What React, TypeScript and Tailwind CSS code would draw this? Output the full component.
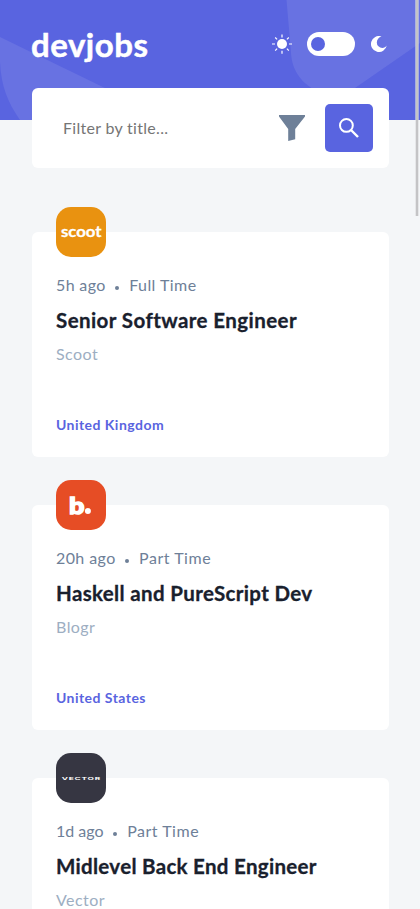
import React from "react";

type Job = {
  logo: React.ReactNode;
  logoClass: string;
  age: string;
  ageClass: string;
  contract: string;
  contractClass: string;
  title: string;
  titleClass: string;
  company: string;
  location: string;
};

const jobs: Job[] = [
  {
    logo: <ScootLogo />,
    logoClass: "bg-[#e99210]",
    age: "5h ago",
    ageClass: "tracking-[0.35px]",
    contract: "Full Time",
    contractClass: "tracking-[0.45px]",
    title: "Senior Software Engineer",
    titleClass: "tracking-[0.42px]",
    company: "Scoot",
    location: "United Kingdom",
  },
  {
    logo: <BlogrLogo />,
    logoClass: "bg-[#e64d25]",
    age: "20h ago",
    ageClass: "tracking-[0.4px]",
    contract: "Part Time",
    contractClass: "tracking-[0.52px]",
    title: "Haskell and PureScript Dev",
    titleClass: "tracking-[0.35px]",
    company: "Blogr",
    location: "United States",
  },
  {
    logo: <VectorLogo />,
    logoClass: "bg-[#363642]",
    age: "1d ago",
    ageClass: "tracking-[0.01px]",
    contract: "Part Time",
    contractClass: "tracking-[0.52px]",
    title: "Midlevel Back End Engineer",
    titleClass: "tracking-[0.3px]",
    company: "Vector",
    location: "Russia",
  },
];

function ScootLogo() {
  return (
    <svg width="50" height="50" viewBox="0 0 50 50" fill="white" stroke="white" strokeWidth="0.3">
      <text x="5" y="29.9" textLength="40.5" lengthAdjust="spacingAndGlyphs" fontFamily="Lato, sans-serif" fontSize="15.5" fontWeight="700">
        scoot
      </text>
    </svg>
  );
}

function BlogrLogo() {
  return (
    <svg width="50" height="50" viewBox="0 0 50 50" fill="white">
      <text x="13" y="33.7" textLength="15.5" lengthAdjust="spacingAndGlyphs" fontFamily="Lato, sans-serif" fontSize="22.5" fontWeight="900" stroke="white" strokeWidth="1.3">
        b
      </text>
      <circle cx="31.9" cy="31" r="3" />
    </svg>
  );
}

function VectorLogo() {
  return (
    <svg width="50" height="50" viewBox="0 0 50 50" fill="white">
      <text x="5.7" y="26.9" textLength="39.4" lengthAdjust="spacingAndGlyphs" letterSpacing="0.4" fontFamily="Inter, sans-serif" fontSize="4.1" fontWeight="700">
        VECTOR
      </text>
    </svg>
  );
}

function HeaderPattern() {
  return (
    <svg className="absolute inset-0" width="420" height="120" fill="white" fillOpacity="0.09">
      <path d="M0 37 L105 88 L170 120 L20 120 C8 103 1 86 0 62 Z" />
      <path d="M286.5 0 L291 53 C292 72 303 84 317 91 C330 97 344 96 355 88 L420 43 L420 0 Z" />
    </svg>
  );
}

function SunIcon() {
  return (
    <svg width="20" height="20" viewBox="0 0 20 20" fill="none" stroke="white" strokeWidth="1.2">
      <circle cx="10" cy="10" r="5" fill="white" stroke="none" />
      <path d="M0 10h3M17 10h3M3.2 3.5l1.9 1.9M14.9 14.7l1.9 1.9M3.2 16.6l1.9-1.9M14.9 5.4l1.9-1.9" />
      <path d="M10 .5v3M10 16.7v3" strokeWidth="2" strokeOpacity="0.6" />
    </svg>
  );
}

function MoonIcon() {
  return (
    <svg width="16" height="16" viewBox="0 0 16 16" fill="white">
      <path d="M10.5 .4A8 8 0 1 0 15.8 9.6C14.8 11 13.2 11.9 11.3 11.9A5.5 5.5 0 0 1 5.8 6.4C5.8 3.4 7.8 1.1 10.5 .4Z" />
    </svg>
  );
}

function JobCard({ job }: { job: Job }) {
  return (
    <article className="relative h-[225px] shrink-0 rounded-md bg-white px-6 pt-[41px]">
      <div className={`absolute -top-[25px] left-6 size-[50px] overflow-hidden rounded-[15px] ${job.logoClass}`}>
        {job.logo}
      </div>
      <div className="flex h-6 items-center text-base leading-6 text-[#6e8098]">
        <span className={job.ageClass}>{job.age}</span>
        <span className="mt-[6px] ml-[9px] mr-[10px] size-[4.5px] rounded-full bg-[#6e8098]" />
        <span className={job.contractClass}>{job.contract}</span>
      </div>
      <h2 className={`mt-[10px] text-[20.5px] leading-[26px] font-bold whitespace-nowrap text-[#19202d] [font-variant-ligatures:none] [-webkit-text-stroke:0.3px_#19202d] ${job.titleClass}`}>
        {job.title}
      </h2>
      <p className="mt-[9px] leading-6 tracking-[0.45px] text-[#9daec2]">{job.company}</p>
      <p className="mt-[47px] text-sm leading-6 font-bold tracking-[0.46px] text-[#5964e0]">{job.location}</p>
    </article>
  );
}

export default function App() {
  return (
    <div className="relative flex h-[909px] w-[420px] flex-col overflow-hidden bg-[#f4f6f8] font-[Lato,sans-serif]">
      <header className="relative h-[120px] shrink-0 bg-[#5964e0]">
        <HeaderPattern />
        <div className="relative flex h-[88px] items-center justify-between pr-[33px] pl-[31px]">
          <h1 className="text-[33px] leading-10 font-bold tracking-[0.5px] text-white [-webkit-text-stroke:0.5px_white]">devjobs</h1>
          <div className="flex items-center">
            <SunIcon />
            <button className="mr-4 ml-[15px] flex h-6 w-12 items-center rounded-full bg-white pl-1">
              <span className="size-[14px] rounded-full bg-[#5964e0]" />
            </button>
            <MoonIcon />
          </div>
        </div>
      </header>
      <main className="relative -mt-8 flex flex-col pr-[31px] pl-8">
        <form className="flex h-20 items-center rounded-md bg-white pr-4 pl-[31px]">
          <input
            className="min-w-0 flex-1 text-base tracking-[0.3px] outline-none placeholder:text-[#757575]"
            placeholder="Filter by title..."
          />
          <svg className="mr-5 shrink-0" width="26" height="26" viewBox="0 0 26 26" fill="#6e8098">
            <path d="M0 0H26V1.6L16.2 14V24.2L9.2 26V14L0 1.6Z" />
          </svg>
          <button type="button" className="flex size-12 shrink-0 items-center justify-center rounded-[5px] bg-[#5964e0]">
            <svg width="20" height="20" viewBox="0 0 20 20" fill="none" stroke="white" strokeWidth="2">
              <circle cx="7.4" cy="7.4" r="6.4" />
              <path d="M12 12L19 19" strokeWidth="2.4" />
            </svg>
          </button>
        </form>
        <section className="mt-16 flex flex-col gap-12">
          {jobs.map((job) => (
            <JobCard key={job.title} job={job} />
          ))}
        </section>
      </main>
      <div className="absolute top-0 right-px h-[216px] w-[4px] bg-[#dcdde0]/60 px-px">
        <div className="h-full w-[2px] bg-[#c4c4c6]" />
      </div>
    </div>
  );
}
